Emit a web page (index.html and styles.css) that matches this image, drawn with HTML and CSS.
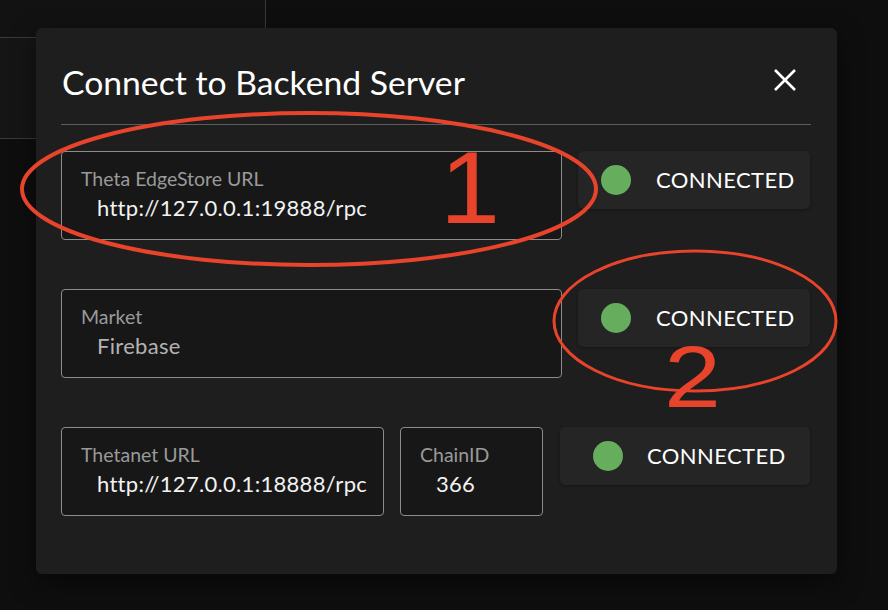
FILE: index.html
```html
<!DOCTYPE html>
<html>
<head>
<meta charset="utf-8">
<link rel="stylesheet" href="styles.css">
</head>
<body>
<div class="backdrop">
  <div class="bg-top"></div>
  <div class="bg-side"></div>
</div>

<div class="dialog">
  <div class="dialog-header">
    <h2 class="dialog-title">Connect to Backend Server</h2>
    <button class="close-btn" aria-label="Close">
      <svg width="24" height="24" viewBox="0 0 24 24"><path d="M2 2 L22 22 M22 2 L2 22" stroke="#fff" stroke-width="2.6" fill="none"/></svg>
    </button>
  </div>
  <div class="divider"></div>
  <div class="dialog-body">
    <div class="row">
      <div class="field field-wide">
        <div class="field-label">Theta EdgeStore URL</div>
        <div class="field-value">http://127.0.0.1:19888/rpc</div>
      </div>
      <div class="status status-a"><span class="dot"></span><span class="status-text">CONNECTED</span></div>
    </div>
    <div class="row">
      <div class="field field-wide">
        <div class="field-label">Market</div>
        <div class="field-value disabled">Firebase</div>
      </div>
      <div class="status status-a"><span class="dot"></span><span class="status-text">CONNECTED</span></div>
    </div>
    <div class="row">
      <div class="field field-url">
        <div class="field-label">Thetanet URL</div>
        <div class="field-value">http://127.0.0.1:18888/rpc</div>
      </div>
      <div class="field field-chain">
        <div class="field-label">ChainID</div>
        <div class="field-value">366</div>
      </div>
      <div class="status status-b"><span class="dot"></span><span class="status-text">CONNECTED</span></div>
    </div>
  </div>
</div>

<svg class="annotations" width="888" height="610" viewBox="0 0 888 610">
  <ellipse cx="309" cy="189" rx="287" ry="76" fill="none" stroke="#e8432b" stroke-width="4"/>
  <ellipse cx="695" cy="321" rx="141" ry="70" fill="none" stroke="#e8432b" stroke-width="3"/>
  <text x="440" y="223" class="anno-num anno-1" textLength="60" lengthAdjust="spacingAndGlyphs">1</text>
  <text x="664" y="407" class="anno-num anno-2" textLength="57" lengthAdjust="spacingAndGlyphs">2</text>
</svg>
</body>
</html>
```

FILE: styles.css
```css
* { box-sizing: border-box; }
html, body {
  margin: 0;
  padding: 0;
  width: 888px;
  height: 610px;
  overflow: hidden;
  background: #0e0e0e;
  font-family: Lato, "Open Sans", sans-serif;
}
.backdrop {
  position: absolute;
  inset: 0;
}
.bg-top {
  position: absolute;
  left: 0;
  top: 0;
  width: 266px;
  height: 38px;
  background: #121212;
  border-right: 1px solid #3a3a3a;
  border-bottom: 1px solid #3a3a3a;
}
.bg-side {
  position: absolute;
  left: 0;
  top: 38px;
  width: 40px;
  height: 101px;
  background: #151515;
  border-bottom: 1px solid #3a3a3a;
}
.dialog {
  position: absolute;
  left: 36px;
  top: 28px;
  width: 801px;
  background: #1e1e1e;
  border-radius: 6px;
  padding: 0 26px 58px 25px;
  box-shadow: 0 8px 24px rgba(0,0,0,0.5);
}
.dialog-header {
  display: flex;
  align-items: center;
  justify-content: space-between;
  padding-top: 34px;
  padding-bottom: 22px;
}
.dialog-title {
  margin: 0 0 0 1px;
  font-weight: 400;
  font-size: 33.7px;
  line-height: 40px;
  color: #fff;
}
.close-btn {
  background: none;
  border: none;
  padding: 0;
  margin: 0 14px 4px 0;
  width: 24px;
  height: 24px;
  display: flex;
}
.divider {
  height: 1px;
  background: #5c5c5c;
}
.dialog-body {
  display: flex;
  flex-direction: column;
  gap: 49px;
  padding-top: 26px;
}
.row {
  display: flex;
  align-items: flex-start;
  gap: 16px;
}
.field {
  height: 89px;
  border: 1px solid #8c8c8c;
  border-radius: 4px;
  background: #171717;
  padding: 14px 19px 0;
}
.field-wide { width: 501px; }
.field-url { width: 323px; }
.field-chain { width: 143px; }
.field-label {
  font-size: 19.5px;
  line-height: 25px;
  color: #9a9a9a;
}
.field-value {
  font-size: 22px;
  line-height: 32px;
  color: #f2f2f2;
  padding-left: 16px;
  margin-top: 1px;
  letter-spacing: 0.3px;
  white-space: nowrap;
}
.field-value.disabled { color: #b3b3b3; }
.status {
  height: 58px;
  background: #252525;
  border-radius: 5px;
  display: flex;
  align-items: center;
  gap: 25px;
  box-shadow: 0 1px 3px rgba(0,0,0,0.35);
}
.status-a { width: 232px; padding-left: 23px; }
.status-b { width: 250px; margin-left: 1px; padding-left: 33px; gap: 24px; }
.dot {
  width: 30px;
  height: 30px;
  border-radius: 50%;
  background: #66ad5e;
  flex: none;
}
.status-text {
  font-size: 22px;
  color: #fff;
  letter-spacing: 0.4px;
  margin-top: -1px;
}
.annotations {
  position: absolute;
  left: 0;
  top: 0;
  pointer-events: none;
}
.anno-num {
  font-family: "Liberation Sans", Arial, sans-serif;
  fill: #e8432b;
}
.anno-1 { font-size: 102px; }
.anno-2 { font-size: 87px; }
```
